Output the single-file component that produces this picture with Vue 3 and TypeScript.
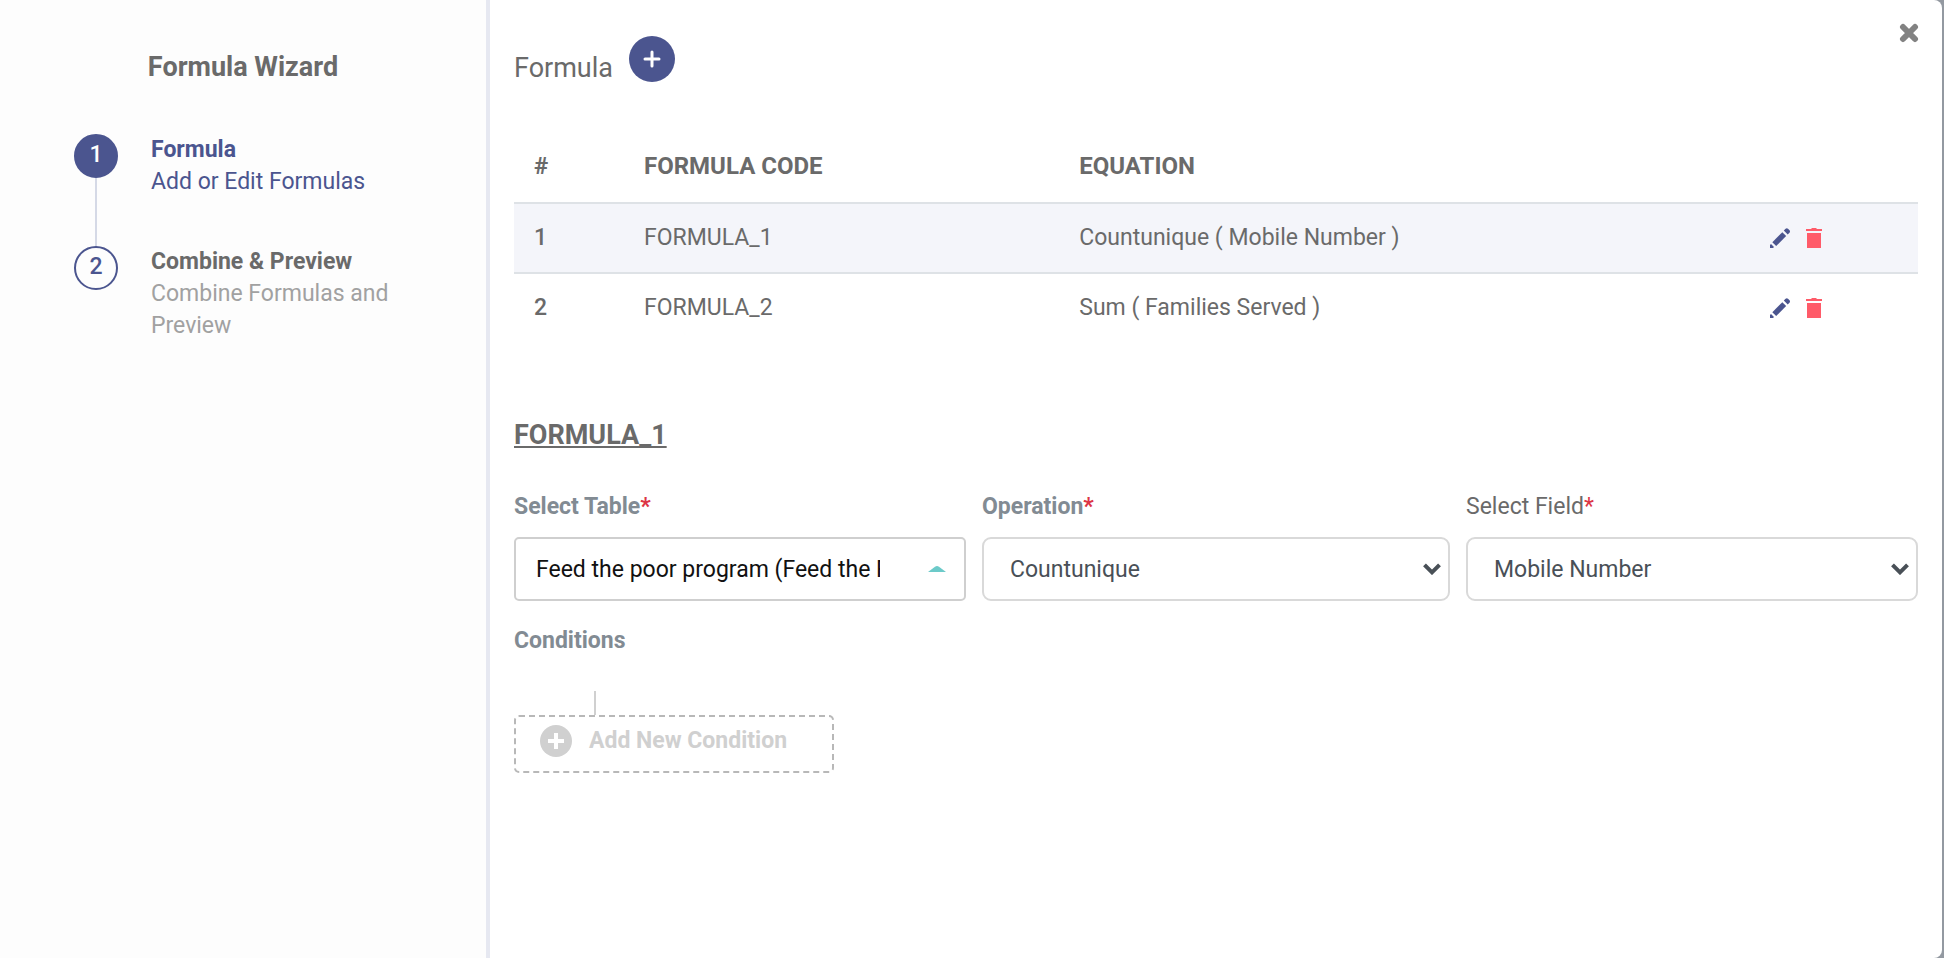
<script setup lang="ts">
import { ref } from 'vue'

interface Step {
  title: string
  hint: string
}

interface Formula {
  code: string
  equation: string
}

const steps: Step[] = [
  { title: 'Formula', hint: 'Add or Edit Formulas' },
  { title: 'Combine & Preview', hint: 'Combine Formulas and Preview' },
]
const activeStep = ref(0)

const formulas = ref<Formula[]>([
  { code: 'FORMULA_1', equation: 'Countunique ( Mobile Number )' },
  { code: 'FORMULA_2', equation: 'Sum ( Families Served )' },
])
const selected = ref(0)

const table = ref('Feed the poor program (Feed the Poor)')
const operation = ref('Countunique')
const field = ref('Mobile Number')

const operations = ['Countunique', 'Sum', 'Average']
const fields = ['Mobile Number', 'Families Served']

function addFormula(): void {
  formulas.value.push({ code: `FORMULA_${formulas.value.length + 1}`, equation: '' })
}

function removeFormula(index: number): void {
  formulas.value.splice(index, 1)
  selected.value = 0
}
</script>

<template>
  <div class="backdrop">
    <div class="dialog" role="dialog" aria-labelledby="wizard-title">
      <aside class="sidebar">
        <h1 id="wizard-title" class="wizard-title">Formula Wizard</h1>
        <ol class="steps">
          <li
            v-for="(step, i) in steps"
            :key="step.title"
            class="step"
            :class="{ active: i === activeStep }"
          >
            <div class="marker">
              <span class="circle">{{ i + 1 }}</span>
              <span v-if="i < steps.length - 1" class="connector"></span>
            </div>
            <div class="step-text">
              <div class="step-title">{{ step.title }}</div>
              <div class="step-hint">{{ step.hint }}</div>
            </div>
          </li>
        </ol>
      </aside>

      <main class="content">
        <button class="close" type="button" aria-label="Close">
          <svg width="20" height="20" viewBox="0 0 20 20">
            <path d="M4 4l12 12M16 4L4 16" stroke="#828282" stroke-width="6" stroke-linecap="round" />
          </svg>
        </button>

        <header class="heading">
          <h2 class="heading-text">Formula</h2>
          <button class="add" type="button" aria-label="Add formula" @click="addFormula">
            <svg width="18" height="18" viewBox="0 0 18 18">
              <path d="M9 2v14M2 9h14" stroke="#fff" stroke-width="3" stroke-linecap="round" />
            </svg>
          </button>
        </header>

        <table class="formulas">
          <colgroup>
            <col class="col-index" />
            <col class="col-code" />
            <col />
            <col class="col-actions" />
          </colgroup>
          <thead>
            <tr>
              <th scope="col">#</th>
              <th scope="col">FORMULA CODE</th>
              <th scope="col">EQUATION</th>
              <td></td>
            </tr>
          </thead>
          <tbody>
            <tr v-for="(f, i) in formulas" :key="f.code" :class="{ selected: i === selected }">
              <th scope="row">{{ i + 1 }}</th>
              <td>{{ f.code }}</td>
              <td>{{ f.equation }}</td>
              <td>
                <div class="actions">
                  <button type="button" :aria-label="`Edit ${f.code}`" @click="selected = i">
                    <svg width="20" height="20" viewBox="0 0 20 20" fill="#4b558f">
                      <path d="M0 20v-3l1-1 3 3-1 1z" />
                      <path d="M2.300 14.200L12.300 4.200l3.900 3.900L6.200 18z" />
                      <path d="M13.800 2.600L15.600 .8q1.200-1.100 2.400 0l1.500 1.500q1 1.200 0 2.400L17.700 6.500z" />
                    </svg>
                  </button>
                  <button type="button" :aria-label="`Delete ${f.code}`" @click="removeFormula(i)">
                    <svg width="16" height="20" viewBox="0 0 16 20" fill="#ff5b69">
                      <path d="M0 1h5l1-1h4l1 1h5v2H0zM1 5h14v15H1z" />
                    </svg>
                  </button>
                </div>
              </td>
            </tr>
          </tbody>
        </table>

        <h3 class="formula-name">{{ formulas[selected]?.code }}</h3>

        <div class="fields">
          <div class="field">
            <label class="label strong" for="table">Select Table<span class="req">*</span></label>
            <div class="combo">
              <input id="table" v-model="table" type="text" />
              <svg width="18" height="6" viewBox="0 0 18 6">
                <path d="M0 6L7 .8q2-1.400 4 0L18 6z" fill="#6ccac9" />
              </svg>
            </div>
          </div>
          <div class="field">
            <label class="label strong" for="operation">Operation<span class="req">*</span></label>
            <div class="dropdown">
              <select id="operation" v-model="operation">
                <option v-for="o in operations" :key="o">{{ o }}</option>
              </select>
              <svg width="18" height="12" viewBox="0 0 18 12">
                <path d="M1.500 1.800L9 9.300 16.500 1.800" fill="none" stroke="#495057" stroke-width="4" />
              </svg>
            </div>
          </div>
          <div class="field">
            <label class="label" for="field">Select Field<span class="req">*</span></label>
            <div class="dropdown">
              <select id="field" v-model="field">
                <option v-for="o in fields" :key="o">{{ o }}</option>
              </select>
              <svg width="18" height="12" viewBox="0 0 18 12">
                <path d="M1.500 1.800L9 9.300 16.500 1.800" fill="none" stroke="#495057" stroke-width="4" />
              </svg>
            </div>
          </div>
        </div>

        <h4 class="label strong conditions">Conditions</h4>
        <div class="stem"></div>
        <button class="add-condition" type="button">
          <svg width="32" height="32" viewBox="0 0 32 32">
            <circle cx="16" cy="16" r="16" fill="#d0d0d0" />
            <path d="M16 8v16M8 16h16" stroke="#fff" stroke-width="4" />
          </svg>
          <span>Add New Condition</span>
        </button>
      </main>
    </div>
  </div>
</template>

<style>
body {
  margin: 0;
}
</style>

<style scoped>
.backdrop {
  box-sizing: border-box;
  min-height: 100vh;
  padding-right: 2px;
  display: flex;
  background: #9399a1;
  font-family: Roboto, "Open Sans", sans-serif;
  font-size: 23px;
  line-height: 32px;
  color: #6a6a6a;
}

.dialog {
  flex: 1;
  display: flex;
  background: #fff;
  border-radius: 0 8px 8px 0;
}

button {
  margin: 0;
  padding: 0;
  border: 0;
  background: none;
  font: inherit;
  color: inherit;
  cursor: pointer;
}

svg {
  display: block;
  flex: none;
}

.sidebar {
  box-sizing: border-box;
  flex: none;
  width: 490px;
  padding: 50px 74px 0;
  background: #fdfdfd;
  border-right: 4px solid #e6e8f1;
}

.wizard-title {
  margin: 0 0 50px;
  font-size: 27px;
  line-height: 34px;
  font-weight: 700;
  text-align: center;
}

.steps {
  margin: 0;
  padding: 0;
  list-style: none;
}

.step {
  display: flex;
  gap: 33px;
  min-height: 112px;
}

.marker {
  flex: none;
  display: flex;
  flex-direction: column;
  align-items: center;
}

.circle {
  box-sizing: border-box;
  width: 44px;
  height: 44px;
  border: 2px solid #4b558f;
  border-radius: 50%;
  line-height: 38px;
  font-weight: 500;
  text-align: center;
  color: #4b558f;
}

.connector {
  flex: 1;
  width: 2px;
  background: #d5d9e6;
}

.step-title {
  font-weight: 700;
}

.step-hint {
  color: #a1a1a1;
}

.active .circle {
  background: #4b558f;
  color: #fff;
}

.active .step-title,
.active .step-hint {
  color: #4b558f;
}

.content {
  position: relative;
  flex: 1;
  min-width: 0;
  padding: 36px 24px 40px;
}

.close {
  position: absolute;
  top: 23px;
  right: 23px;
}

.heading {
  display: flex;
  align-items: flex-start;
  gap: 16px;
  margin-bottom: 46px;
}

.heading-text {
  margin: 16px 0 0;
  font-size: 27px;
  font-weight: 400;
}

.add {
  display: flex;
  align-items: center;
  justify-content: center;
  width: 46px;
  height: 46px;
  border-radius: 50%;
  background: #4b558f;
}

.formulas {
  width: 100%;
  table-layout: fixed;
  border-collapse: separate;
  border-spacing: 0;
  text-align: left;
}

.col-index {
  width: 110px;
}

.col-code {
  width: 31%;
}

.col-actions {
  width: 168px;
}

.formulas th,
.formulas td {
  padding: 18px 20px;
  font-weight: 400;
}

.formulas thead th {
  padding: 20px;
  font-size: 24px;
  font-weight: 700;
}

.formulas tbody th {
  font-weight: 500;
}

.formulas tbody th,
.formulas tbody td {
  border-top: 2px solid #dee2e6;
}

.formulas tbody tr:not(.selected) th,
.formulas tbody tr:not(.selected) td {
  padding-bottom: 20px;
}

.selected {
  background: #f4f5fa;
}

.actions {
  display: flex;
  gap: 16px;
}

.formula-name {
  margin: 75px 0 40px;
  font-size: 27px;
  font-weight: 700;
  text-decoration: underline;
}

.fields {
  display: grid;
  grid-template-columns: 452fr 468fr 452fr;
  gap: 16px;
}

.label {
  display: block;
}

.strong {
  font-weight: 700;
  color: #828b93;
}

.req {
  color: #dc3545;
}

.combo,
.dropdown {
  box-sizing: border-box;
  height: 64px;
  margin-top: 14px;
  display: grid;
  align-items: center;
}

.combo {
  grid-template-columns: 1fr 18px;
  gap: 48px;
  padding: 0 18px 0 20px;
  border: 2px solid #cfcfcf;
  border-radius: 5px;
}

.combo input {
  width: 100%;
  box-sizing: border-box;
  padding: 2px 0 0;
  border: 0;
  outline: 0;
  background: none;
  font: inherit;
  color: #111;
}

.dropdown select {
  grid-area: 1 / 1;
  box-sizing: border-box;
  width: 100%;
  height: 100%;
  padding: 2px 40px 0 26px;
  border: 2px solid #d9d9d9;
  border-radius: 9px;
  appearance: none;
  background: #fff;
  font: inherit;
  color: #495057;
}

.dropdown svg {
  grid-area: 1 / 1;
  justify-self: end;
  margin-right: 9px;
  pointer-events: none;
}

.conditions {
  margin: 24px 0 34px;
}

.stem {
  width: 2px;
  height: 24px;
  margin-left: 80px;
  background: #d0d0d0;
}

.add-condition {
  box-sizing: border-box;
  display: flex;
  align-items: center;
  gap: 17px;
  width: 320px;
  padding: 8px 24px 14px;
  border: 2px dashed #b8b8b8;
  border-radius: 5px;
  font-weight: 700;
  color: #d0d0d0;
}
</style>
